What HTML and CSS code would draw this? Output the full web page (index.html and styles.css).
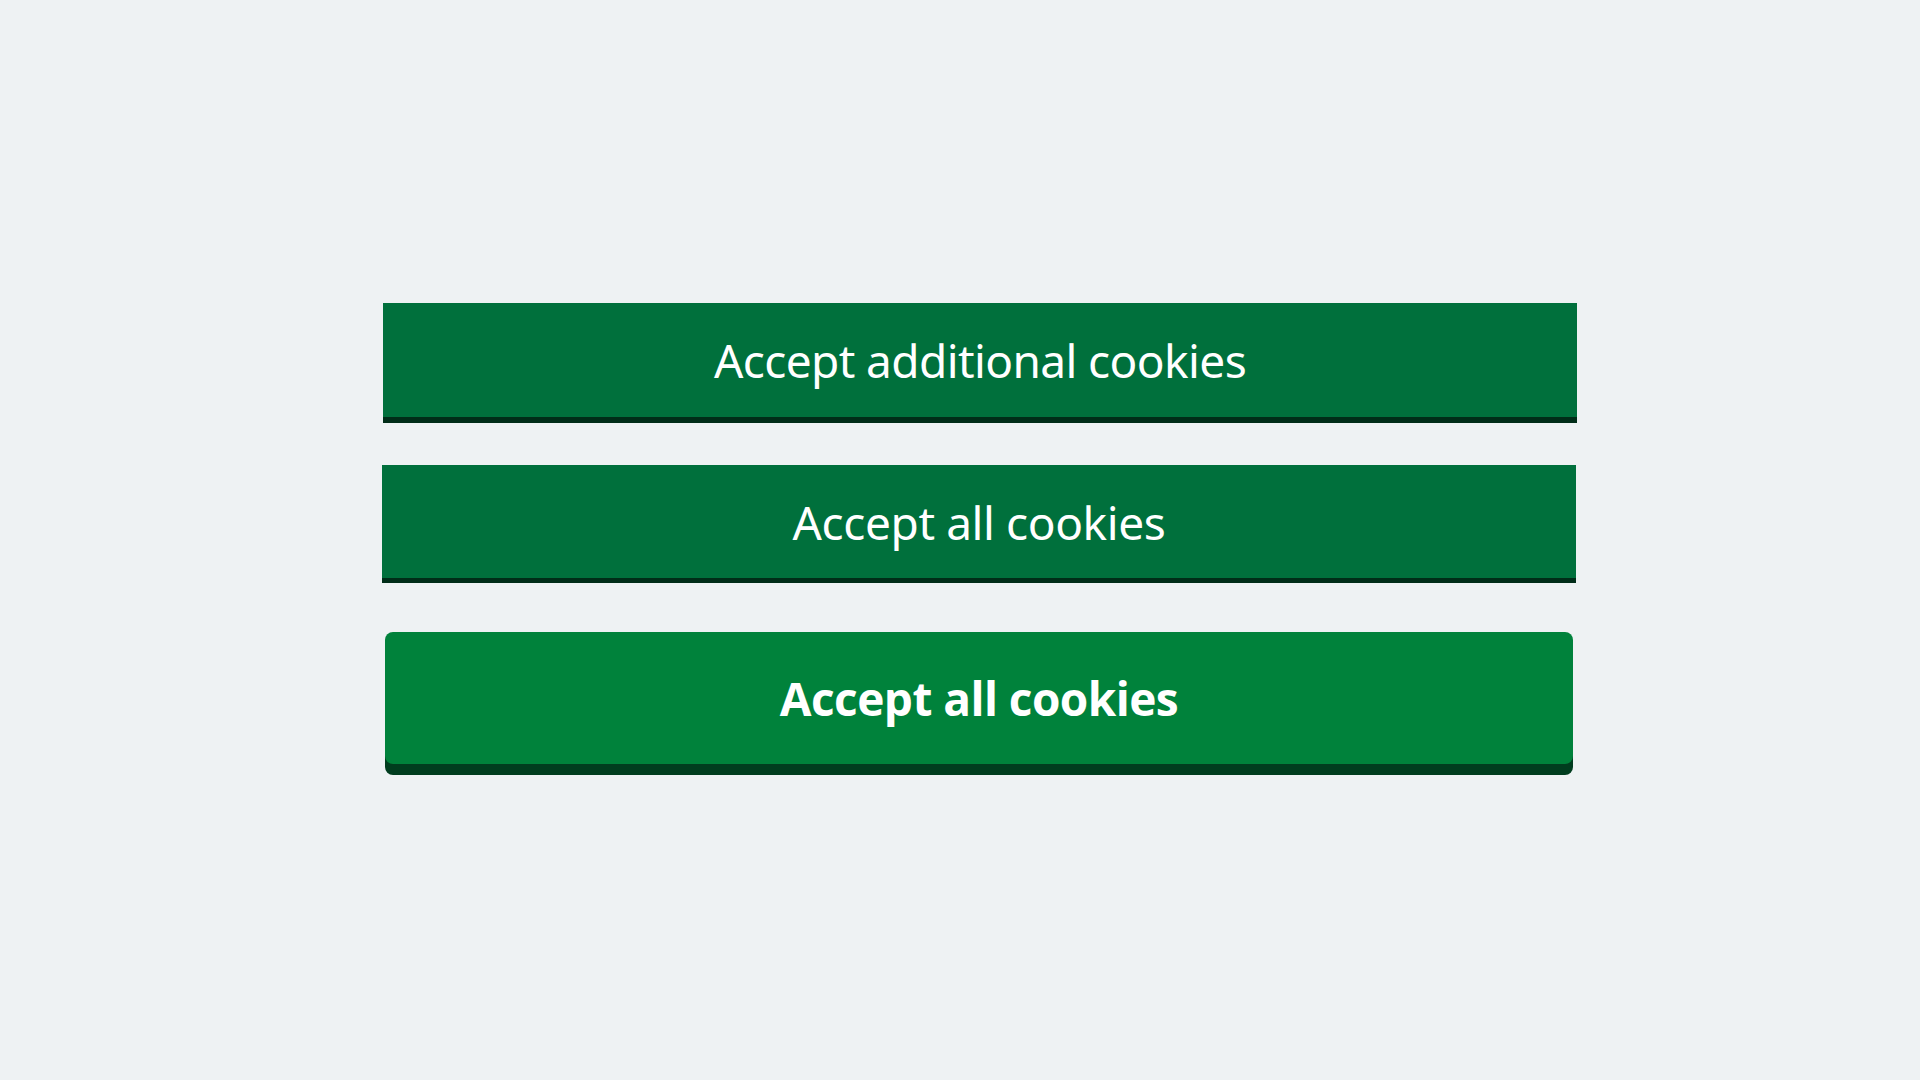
FILE: index.html
```html
<!DOCTYPE html>
<html lang="en">
<head>
<meta charset="utf-8">
<title>Cookie buttons</title>
<link rel="stylesheet" href="styles.css">
</head>
<body>
<main class="stack">
  <button class="btn btn-flat btn-one" type="button">Accept additional cookies</button>
  <button class="btn btn-flat btn-two" type="button">Accept all cookies</button>
  <button class="btn btn-round" type="button">Accept all cookies</button>
</main>
</body>
</html>
```
FILE: styles.css
```css
html, body {
  margin: 0;
  padding: 0;
}
body {
  background: #eef2f3;
  width: 1920px;
  height: 1080px;
  overflow: hidden;
}
.stack {
  display: flex;
  flex-direction: column;
  align-items: flex-start;
  padding-top: 303px;
  padding-left: 382px;
}
.btn {
  border: 0;
  padding: 0;
  margin: 0;
  display: flex;
  align-items: center;
  justify-content: center;
  color: #ffffff;
  cursor: pointer;
}
.btn-flat {
  width: 1194px;
  height: 114px;
  background: #00703c;
  box-shadow: 0 6px 0 #002d18;
  font-family: "Noto Sans", "Open Sans", sans-serif;
  font-weight: 400;
  font-size: 46px;
  letter-spacing: -0.55px;
  border-radius: 0;
}
.btn-one {
  margin-left: 1px;
  letter-spacing: -0.6px;
}
.btn-two {
  margin-top: 48px;
  height: 113px;
  box-shadow: 0 5px 0 #002d18;
  letter-spacing: -0.4px;
}
.btn-round {
  margin-top: 54px;
  margin-left: 3px;
  width: 1188px;
  height: 132px;
  background: #00823b;
  border-radius: 8px;
  box-shadow: 0 11px 0 #003d1e;
  font-family: "Open Sans", "Noto Sans", sans-serif;
  font-weight: 700;
  font-size: 46px;
  letter-spacing: -0.55px;
}
```
